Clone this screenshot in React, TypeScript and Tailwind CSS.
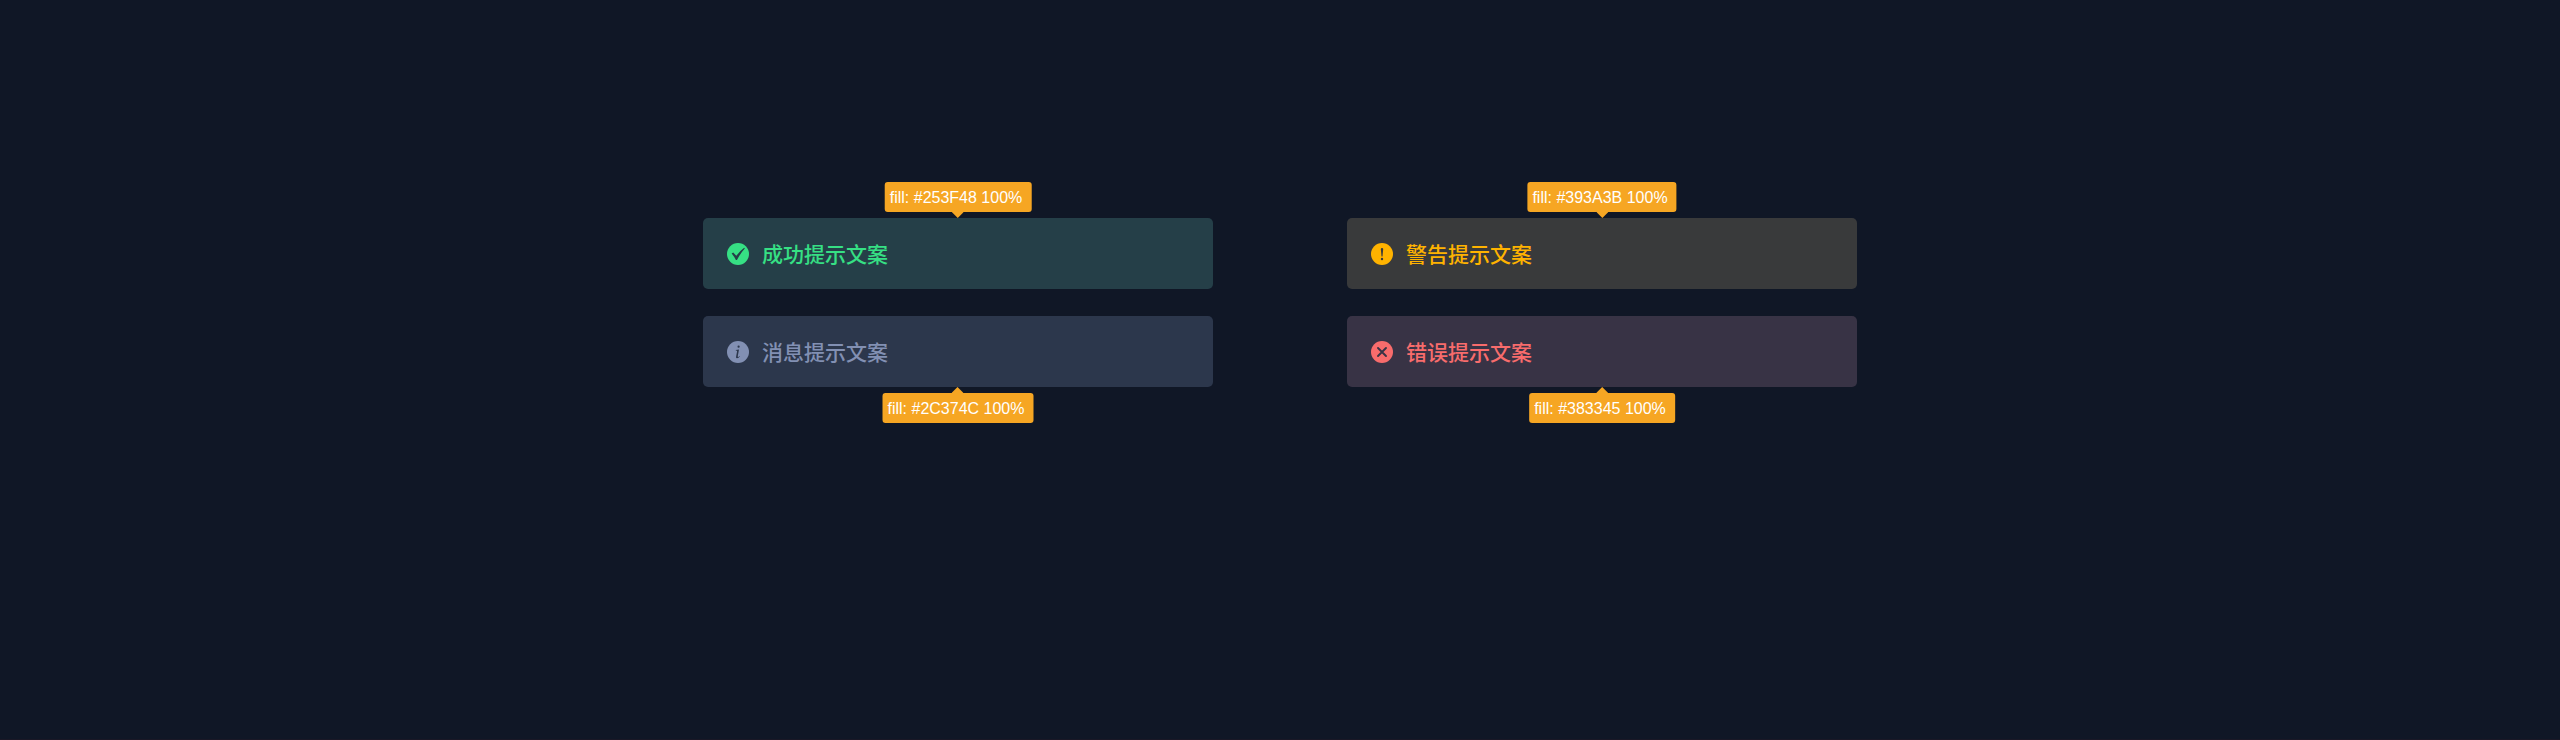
import type { ReactNode } from "react";

type AlertItem = {
  text: string;
  fill: string;
  card: string;
  tone: string;
  tip: "top" | "bottom";
  glyph: ReactNode;
};

const alerts: AlertItem[] = [
  {
    text: "成功提示文案",
    fill: "#253F48",
    card: "bg-[#253f48]",
    tone: "text-[#36e084]",
    tip: "top",
    glyph: <path d="M4.6 10.6 L6.2 9.6 L9.3 12.8 Q12.8 8 17.2 4.8 L17.8 5.4 Q13.6 10 10 17 L8.9 17 Q7.2 13.4 4.6 10.6 Z" />,
  },
  {
    text: "警告提示文案",
    fill: "#393A3B",
    card: "bg-[#393a3b]",
    tone: "text-[#ffb300]",
    tip: "top",
    glyph: (
      <>
        <path d="M9.8 6.1 Q9.8 5 11 5 Q12.2 5 12.2 6.1 L11.5 13.4 H10.5 Z" />
        <circle cx="11" cy="16" r="1.2" />
      </>
    ),
  },
  {
    text: "消息提示文案",
    fill: "#2C374C",
    card: "bg-[#2c374c]",
    tone: "text-[#8290b3]",
    tip: "bottom",
    glyph: (
      <>
        <circle cx="11.6" cy="5.7" r="1.1" />
        <path d="M8.8 9.1 L12 8.5 L10.8 15 Q10.6 16.2 11.2 16.1 Q11.9 15.8 12.4 15 L12.9 15.3 Q11.6 17.3 10.1 17.3 Q8.7 17.2 9.1 15.4 L10.1 10.3 Q10.2 9.6 8.8 9.6 Z" />
      </>
    ),
  },
  {
    text: "错误提示文案",
    fill: "#383345",
    card: "bg-[#383345]",
    tone: "text-[#f86c6c]",
    tip: "bottom",
    glyph: <path d="M7 7 L15 15 M15 7 L7 15" stroke="currentColor" strokeWidth="1.9" strokeLinecap="round" />,
  },
];

const glyphTone: Record<string, string> = {
  "#253F48": "text-[#253f48]",
  "#393A3B": "text-[#393a3b]",
  "#2C374C": "text-[#2c374c]",
  "#383345": "text-[#383345]",
};

function Tip({ side, fill }: { side: "top" | "bottom"; fill: string }) {
  const top = side === "top";
  return (
    <div
      className={
        top
          ? "absolute bottom-full left-1/2 flex -translate-x-1/2 flex-col items-center"
          : "absolute left-1/2 top-full flex -translate-x-1/2 flex-col-reverse items-center"
      }
    >
      <span className="whitespace-nowrap rounded-[3px] bg-[#f6a623] pt-[4px] pr-[9px] pb-[2px] pl-[5px] font-['Liberation_Sans',sans-serif] text-base text-white">
        fill: {fill} 100%
      </span>
      <svg viewBox="0 0 12 6" className={top ? "h-1.5 w-3 fill-[#f6a623]" : "h-1.5 w-3 rotate-180 fill-[#f6a623]"} aria-hidden="true">
        <path d="M0 0 H12 L6 6 Z" />
      </svg>
    </div>
  );
}

function Alert({ item }: { item: AlertItem }) {
  return (
    <div role="status" className={`relative flex h-[71px] items-center gap-[13px] rounded-[5px] px-6 ${item.card} ${item.tone}`}>
      <svg viewBox="0 0 22 22" className="size-[22px] shrink-0" aria-hidden="true">
        <circle cx="11" cy="11" r="11" fill="currentColor" />
        <g className={glyphTone[item.fill]} fill="currentColor">
          {item.glyph}
        </g>
      </svg>
      <p className="pb-0.5 font-['Noto_Sans_CJK_SC',sans-serif] text-[21px] font-medium leading-8">{item.text}</p>
      <Tip side={item.tip} fill={item.fill} />
    </div>
  );
}

export default function App() {
  return (
    <main className="min-h-screen border-b border-[#1a1826] bg-[#101726] px-8 pt-[218px]">
      <div className="mx-auto grid max-w-[1154px] grid-cols-2 gap-x-[134px] gap-y-[27px]">
        {alerts.map((item) => (
          <Alert key={item.text} item={item} />
        ))}
      </div>
    </main>
  );
}
